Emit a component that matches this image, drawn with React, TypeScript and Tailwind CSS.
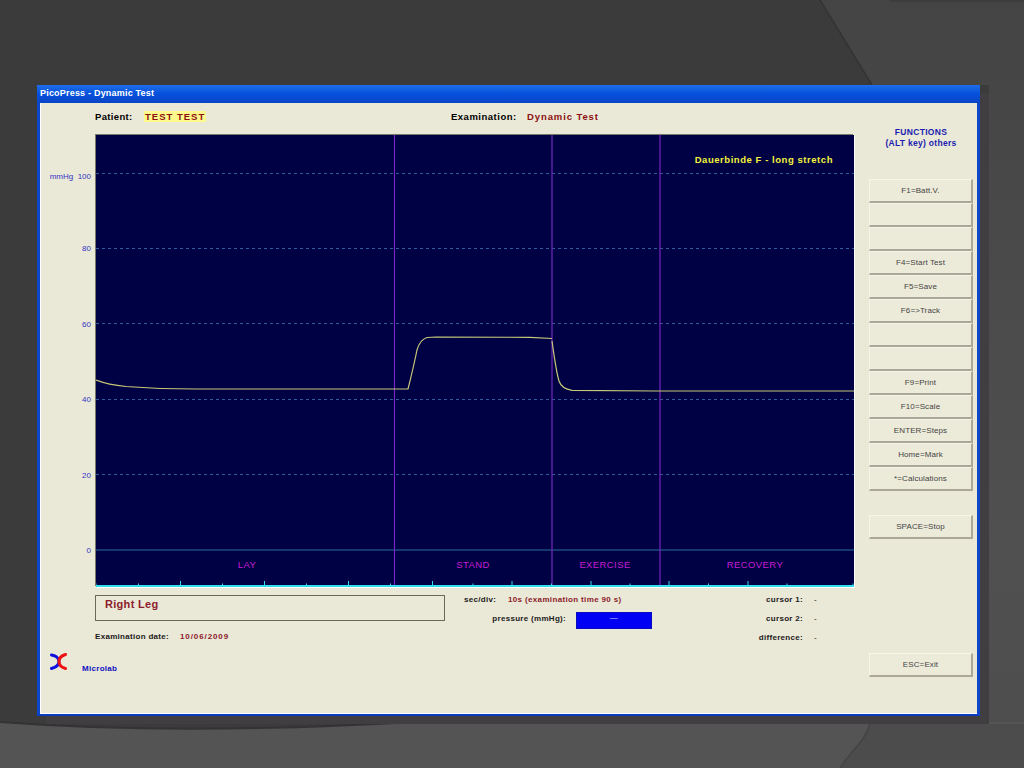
const buttons = ['F1=Batt.V.', '', '', 'F4=Start Test', 'F5=Save', 'F6=>Track', '', '', 'F9=Print', 'F10=Scale', 'ENTER=Steps', 'Home=Mark', '*=Calculations'];
const axis = ['80', '60', '40', '20', '0'];
const gridY = [38, 113, 188, 264, 339];
const majorTicks = [84.5, 168.5, 252.5, 336.5, 416, 495, 573, 652];
const minorTicks = [0, 42.5, 126.5, 210.5, 294.5, 377, 455.5, 534, 612.5, 691, 757];
const phases = [
  { label: 'LAY', x: 151 },
  { label: 'STAND', x: 377 },
  { label: 'EXERCISE', x: 509 },
  { label: 'RECOVERY', x: 659 },
];
const trace =
  'M0 245 C8 248 16 250 30 251.5 C50 253 70 254 100 254 L312 254 C314 246 318 230 321 215 C323 208 326 204 331 202.5 L340 202 L434 202.3 L456 203.5 M456 206 C458 220 460 236 463 246 C465 252 470 254.5 476 255.3 L560 256 L758 256';

function Background() {
  return (
    <svg className="absolute inset-0" width="1024" height="768" viewBox="0 0 1024 768">
      <defs>
        <linearGradient id="rightSide" x1="0" y1="0" x2="0" y2="1">
          <stop offset="0" stopColor="#444444" />
          <stop offset="0.75" stopColor="#505050" />
          <stop offset="1" stopColor="#4e4e4e" />
        </linearGradient>
      </defs>
      <rect width="1024" height="768" fill="#3b3b3b" />
      <path d="M820 0 L872 85 L989 85 L989 724 L1024 724 L1024 0 Z" fill="url(#rightSide)" />
      <path d="M820 0 L872 85" stroke="#333333" strokeWidth="1.5" fill="none" />
      <path d="M0 722 C80 728 170 730 260 728 C320 727 370 724 420 722 L1024 722 L1024 768 L0 768 Z" fill="#545454" />
      <path d="M0 722 C80 728 170 730 260 728 C320 727 370 724 420 722" stroke="#333333" strokeWidth="2" fill="none" />
      <path d="M870 724 C866 740 850 752 840 768 L1024 768 L1024 724 Z" fill="#4c4c4c" />
      <path d="M870 724 C866 740 850 752 840 768" stroke="#444444" strokeWidth="1.5" fill="none" />
      <path d="M890 1 L1024 1" stroke="#363636" strokeWidth="1" />
    </svg>
  );
}

function Chart() {
  return (
    <svg width="758" height="452" viewBox="0 0 758 452" className="block bg-[#000044] shadow-[-1px_-1px_0_#77776a,1px_1px_0_#ffffff]">
      {gridY.map((y) => (
        <line key={y} x1="0" x2="758" y1={y + 0.5} y2={y + 0.5} stroke="#2f5c9c" strokeDasharray="3 3" />
      ))}
      <line x1="0" x2="758" y1="415" y2="415" stroke="#1f4a80" strokeWidth="1.5" />
      {[298.5, 456, 564].map((x) => (
        <line key={x} x1={x} x2={x} y1="0" y2="452" stroke="#7426c0" strokeWidth="1.2" />
      ))}
      <path d={trace} fill="none" stroke="#c8c878" strokeWidth="1.2" />
      <text x="737" y="28" textAnchor="end" fill="#f4f43c" fontSize="9.5" fontWeight="700" letterSpacing="0.55">
        Dauerbinde F - long stretch
      </text>
      {phases.map((p) => (
        <text key={p.label} x={p.x} y="433" textAnchor="middle" fill="#c81ed2" fontSize="9.5" letterSpacing="0.4">
          {p.label}
        </text>
      ))}
      <line x1="0" x2="758" y1="451" y2="451" stroke="#35dcec" strokeWidth="2" />
      {majorTicks.map((x) => (
        <line key={x} x1={x} x2={x} y1="446" y2="451" stroke="#35dcec" />
      ))}
      {minorTicks.map((x) => (
        <line key={x} x1={x} x2={x} y1="448.5" y2="451" stroke="#35dcec" />
      ))}
    </svg>
  );
}

function FnButton({ label, className = '' }: { label: string; className?: string }) {
  return (
    <div className={`flex h-6 w-[104px] items-center justify-center border-t border-l border-t-[#f6f5ec] border-l-[#f6f5ec] border-b-2 border-r-2 border-b-[#aca899] border-r-[#aca899] bg-[#ecead9] text-[8px] tracking-[0.1px] text-[#444444] ${className}`}>
      {label}
    </div>
  );
}

export default function App() {
  return (
    <div className="relative h-[768px] w-[1024px] overflow-hidden font-['Liberation_Sans',sans-serif]">
      <Background />

      <div className="relative ml-[37px] mt-[85px] flex h-[631px] w-[943px] flex-col border-x-[3px] border-b-[2px] border-x-[#0b47c8] border-b-[#0b3cc0] bg-[#eae8d7] shadow-[9px_8px_0_#403e40,inset_1px_-1px_0_#ffffff]">
        <div className="-mx-[3px] flex h-[18px] items-center bg-gradient-to-b from-[#1f6ee8] via-[#0550dc] to-[#0a46c4] pl-[3px] text-[9px] font-bold tracking-[0.2px] text-white">
          PicoPress - Dynamic Test
        </div>

        <div className="flex flex-1">
          <div className="w-[817px]">
            <div className="flex h-[32px] items-start pl-[55px] pt-[8px] text-[9.5px] font-bold leading-[11px] tracking-[0.35px] text-black">
              <span className="w-[49px]">Patient:</span>
              <span className="w-[307px] tracking-[1px] text-[#8c1010]">
                <span className="bg-[#fdf98c] px-px">TEST TEST</span>
              </span>
              <span className="w-[76px] tracking-[0.5px]">Examination:</span>
              <span className="tracking-[0.9px] text-[#8c1010]">Dynamic Test</span>
            </div>

            <div className="flex">
              <div className="flex h-[452px] w-[56px] flex-col items-end pr-[5px] pt-[33px] text-[8px] text-[#3434c4]">
                <div className="h-[72.4px] shrink-0 whitespace-pre leading-[18px]">mmHg  100</div>
                {axis.map((label) => (
                  <div key={label} className="h-[75.4px] shrink-0 leading-[18px]">
                    {label}
                  </div>
                ))}
              </div>
              <Chart />
            </div>

            <div className="flex pl-[55px] text-[8px] font-bold tracking-[0.3px] text-[#1a1a1a]">
              <div className="w-[350px] pt-[8px]">
                <div className="h-[26px] border border-[#6b6a5a] pl-[9px] pt-[1px] text-[11px] leading-[15px] text-[#8c1c2c]">
                  Right Leg
                </div>
                <div className="mt-[11px] flex leading-[10px]">
                  <span className="w-[85px]">Examination date:</span>
                  <span className="tracking-[0.9px] text-[#8c1c2c]">10/06/2009</span>
                </div>
              </div>

              <div className="w-[207px] pl-[19px] pt-[8px] leading-[10px]">
                <div className="flex">
                  <span className="w-[44px]">sec/div:</span>
                  <span className="tracking-[0.35px] text-[#8c1c2c]">10s (examination time 90 s)</span>
                </div>
                <div className="mt-[9px] flex">
                  <span className="w-[102px] text-right">pressure (mmHg):</span>
                  <div className="ml-[10px] -mt-[2px] flex h-[17px] w-[76px] items-start justify-center border border-[#0a0ac0] bg-[#0000f4] text-[8px] font-normal text-[#d8d8f8]">
                    —
                  </div>
                </div>
              </div>

              <div className="flex flex-col gap-[9px] pt-[8px] leading-[10px]">
                {['cursor 1:', 'cursor 2:', 'difference:'].map((label) => (
                  <div key={label} className="flex">
                    <span className="w-[151px] text-right">{label}</span>
                    <span className="ml-[11px] font-normal">-</span>
                  </div>
                ))}
              </div>
            </div>

            <div className="flex items-start pl-[10px] pt-[10px]">
              <svg width="18" height="18" viewBox="0 0 18 18" className="block">
                <path d="M1.5 2 C5 2.5 9 4.5 9 8.5 C9 12 5 14.5 1.5 15.5" fill="none" stroke="#1111dd" strokeWidth="3" strokeLinecap="round" />
                <path d="M15.5 1.5 C12 2.5 9 5 9 8.5 C9 12 12 14.5 15.5 15.5" fill="none" stroke="#ee1111" strokeWidth="3" strokeLinecap="round" />
              </svg>
              <span className="ml-[14px] mt-[11px] text-[8px] font-bold leading-[10px] tracking-[0.3px] text-[#1010c0]">Microlab</span>
            </div>
          </div>

          <div className="ml-[12px] flex flex-col">
            <div className="h-[76px] pt-[24px] text-center text-[8.5px] font-bold leading-[11px] tracking-[0.3px] text-[#1c1cb0]">
              <div>FUNCTIONS</div>
              <div>(ALT key) others</div>
            </div>
            {buttons.map((label, i) => (
              <FnButton key={i} label={label} />
            ))}
            <FnButton label="SPACE=Stop" className="mt-[24px]" />
            <FnButton label="ESC=Exit" className="mt-[114px]" />
          </div>
        </div>
      </div>
    </div>
  );
}
